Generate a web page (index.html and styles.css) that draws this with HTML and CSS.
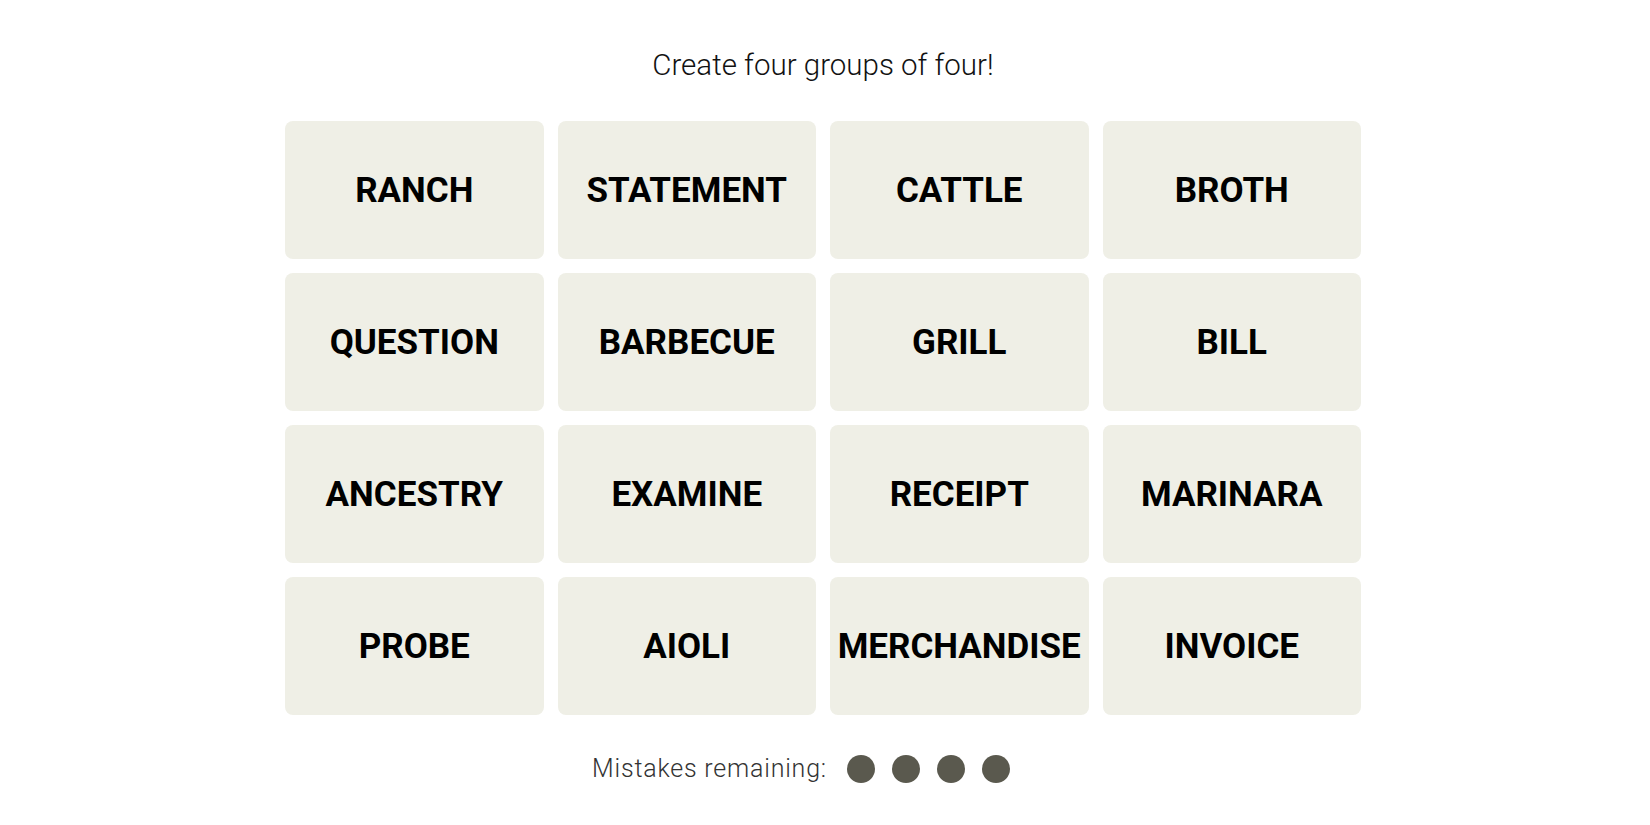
FILE: index.html
```html
<!DOCTYPE html>
<html lang="en">
<head>
<meta charset="utf-8">
<title>Connections</title>
<link rel="stylesheet" href="styles.css">
</head>
<body>
<main class="game">
  <p class="prompt">Create four groups of four!</p>
  <section class="board">
    <button class="tile">RANCH</button>
    <button class="tile">STATEMENT</button>
    <button class="tile">CATTLE</button>
    <button class="tile">BROTH</button>
    <button class="tile">QUESTION</button>
    <button class="tile">BARBECUE</button>
    <button class="tile">GRILL</button>
    <button class="tile">BILL</button>
    <button class="tile">ANCESTRY</button>
    <button class="tile">EXAMINE</button>
    <button class="tile">RECEIPT</button>
    <button class="tile">MARINARA</button>
    <button class="tile">PROBE</button>
    <button class="tile">AIOLI</button>
    <button class="tile">MERCHANDISE</button>
    <button class="tile">INVOICE</button>
  </section>
  <div class="mistakes">
    <span class="mistakes-label">Mistakes remaining:</span>
    <span class="dots">
      <span class="dot"></span>
      <span class="dot"></span>
      <span class="dot"></span>
      <span class="dot"></span>
    </span>
  </div>
</main>
</body>
</html>
```
FILE: styles.css
```css
html, body {
  margin: 0;
  padding: 0;
  background: #ffffff;
}

.game {
  display: flex;
  flex-direction: column;
  align-items: center;
  padding-top: 48px;
  padding-right: 4px;
}

.prompt {
  margin: 0;
  font-family: Roboto, "Liberation Sans", sans-serif;
  font-weight: 300;
  font-size: 29.5px;
  line-height: 34px;
  color: #121212;
}

.board {
  margin-top: 39px;
  display: grid;
  grid-template-columns: repeat(4, 258.5px);
  grid-auto-rows: 138px;
  column-gap: 14px;
  row-gap: 14px;
}

.tile {
  border: none;
  border-radius: 8px;
  background: #efefe6;
  color: #000000;
  font-family: Roboto, "Liberation Sans", sans-serif;
  font-weight: 700;
  font-size: 35px;
  padding: 0;
  display: flex;
  align-items: center;
  justify-content: center;
}

.mistakes {
  margin-top: 39px;
  padding-right: 44px;
  display: flex;
  align-items: center;
  gap: 20px;
  font-family: Roboto, "Liberation Sans", sans-serif;
  font-weight: 300;
  font-size: 25px;
  letter-spacing: 0.8px;
  color: #333333;
}

.dots {
  display: flex;
  gap: 17px;
}

.dot {
  width: 28px;
  height: 28px;
  border-radius: 50%;
  background: #5a594e;
}
```
